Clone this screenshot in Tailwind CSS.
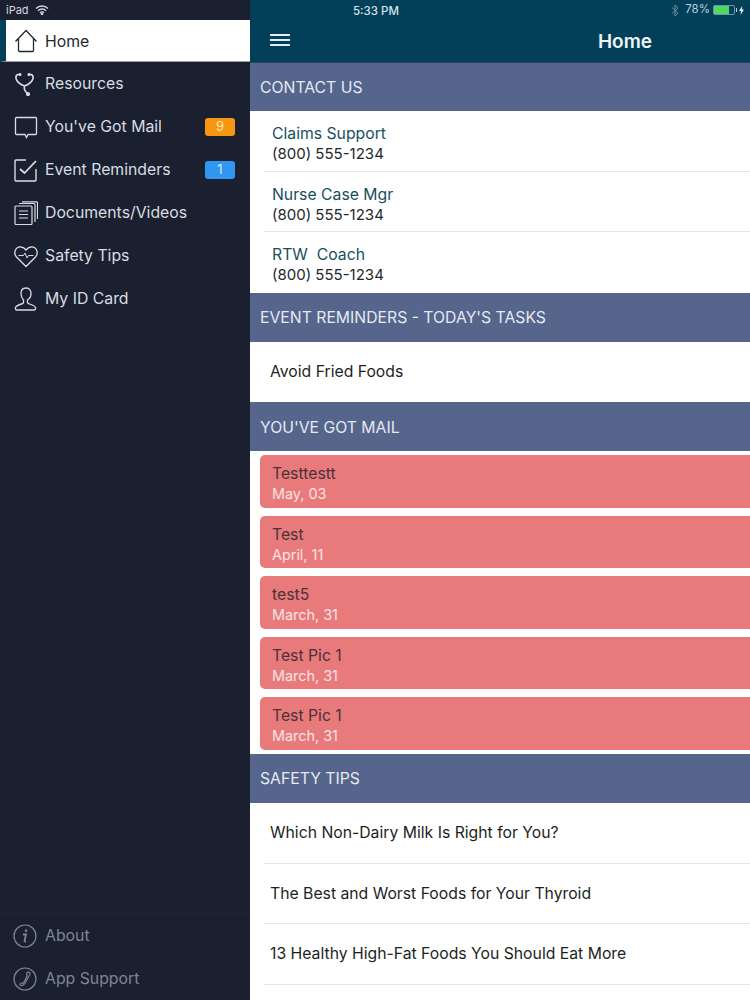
<!DOCTYPE html>
<html lang="en">
  <head>
    <meta charset="UTF-8" />
    <meta name="viewport" content="width=device-width, initial-scale=1.0" />
    <title>Home</title>
    <script src="https://cdn.jsdelivr.net/npm/@tailwindcss/browser@4"></script>
  </head>
  <body class="h-[1000px] w-[750px] overflow-hidden font-['Inter',sans-serif]">
    <div class="flex h-[1000px] w-[750px] overflow-hidden">
      <!-- side menu -->
      <aside class="flex h-full w-[250px] shrink-0 flex-col bg-[#1a2030] text-[#d8dce2]">
        <div class="flex h-[20px] items-center gap-[6px] pl-[6px] text-[11px] text-[#d5d8dd]">
          <span>iPad</span>
          <svg class="h-[10px] w-[14px]" viewBox="0 0 14 10" fill="none" stroke="currentColor" stroke-width="1.4">
            <path d="M1 3.500a8.500 8.500 0 0 1 12 0M3 5.700a5.600 5.600 0 0 1 8 0M5 7.700a2.800 2.800 0 0 1 4 0" />
            <circle cx="7" cy="9" r=".6" fill="currentColor" />
          </svg>
        </div>

        <a class="flex h-[42px] items-center border-b border-l-[6px] border-b-[#9a9ea6] border-l-[#02405a] bg-white text-[#23272f]">
          <svg class="ml-[8px] h-[24px] w-[24px]" viewBox="0 0 24 24" fill="none" stroke="currentColor" stroke-width="1.300">
            <path d="M1.500 12.500 12 1.500l10.500 11M4.500 10v11.500q0 1 1 1h13q1 0 1-1V10" />
          </svg>
          <span class="ml-[7px] pt-[2px] text-[15.8px]">Home</span>
        </a>

        <nav class="flex flex-col text-[15.8px]">
          <a class="flex h-[43px] items-center pl-[14px]">
            <svg class="h-[24px] w-[24px]" viewBox="0 0 24 24" fill="none" stroke="currentColor" stroke-width="1.600">
              <path d="M6 2.500H4Q1.500 3 2 6.500 3 11 10.500 14 18 11 19 6.500 19.500 3 17 2.500H15M10.500 14Q9.500 18 13 21" />
              <circle cx="14" cy="22" r="1.300" fill="currentColor" />
              <circle cx="6" cy="2.500" r=".8" fill="currentColor" />
              <circle cx="15" cy="2.500" r=".8" fill="currentColor" />
            </svg>
            <span class="ml-[7px]">Resources</span>
          </a>
          <a class="flex h-[43px] items-center pl-[14px]">
            <svg class="h-[24px] w-[24px]" viewBox="0 0 24 24" fill="none" stroke="currentColor" stroke-width="1.300">
              <path d="M2.500 2.500h19q1 0 1 1v15q0 1-1 1h-7.500l-1.500 3-1.500-3h-8.500q-1 0-1-1v-15q0-1 1-1Z" />
            </svg>
            <span class="ml-[7px]">You've Got Mail</span>
            <span class="mr-[15px] ml-auto flex h-[18px] w-[30px] items-center justify-center rounded-[3px] bg-[#f5970f] text-[13px] text-[#fde2b5]">9</span>
          </a>
          <a class="flex h-[43px] items-center pl-[14px]">
            <svg class="h-[24px] w-[24px]" viewBox="0 0 24 24" fill="none" stroke="currentColor" stroke-width="1.400">
              <path d="M12 2H2q-1 0-1 1v19q0 1 1 1h19q1 0 1-1V11" />
              <path d="m6 11 4.500 4L22 3" stroke-width="1.800" />
            </svg>
            <span class="ml-[7px]">Event Reminders</span>
            <span class="mr-[15px] ml-auto flex h-[18px] w-[30px] items-center justify-center rounded-[3px] bg-[#2f97f0] text-[13px] text-[#d5ebfd]">1</span>
          </a>
          <a class="flex h-[43px] items-center pl-[14px]">
            <svg class="h-[24px] w-[24px]" viewBox="0 0 24 24" fill="none" stroke="currentColor" stroke-width="1.200">
              <rect x="1" y="5" width="17" height="18.500" rx="1" />
              <path d="M5 2.500h15q1 0 1 1V21M8 .8h14.500q1 0 1 .8V18M5 10h9M5 13.500h9M5 17h9" />
            </svg>
            <span class="ml-[7px]">Documents/Videos</span>
          </a>
          <a class="flex h-[43px] items-center pl-[14px]">
            <svg class="h-[24px] w-[24px]" viewBox="0 0 24 24" fill="none" stroke="currentColor" stroke-width="1.300">
              <path d="M12 22.500 2.500 13Q0 10 1.200 6.500 3 2.500 7 3q3 .3 5 3 2-2.700 5-3 4-.5 5.800 3.500Q24 10 21.500 13Z" />
              <path d="M4.500 11.500h5l1.500-2.500 2 5 1.500-2.500h5" stroke-width="1" />
            </svg>
            <span class="ml-[7px]">Safety Tips</span>
          </a>
          <a class="flex h-[43px] items-center pl-[14px]">
            <svg class="h-[24px] w-[24px]" viewBox="0 0 24 24" fill="none" stroke="currentColor" stroke-width="1.300">
              <path d="M12 1c-3.500 0-5 2.500-5 5.500 0 2.500 1 5 2.500 6.500v2.500q-.2 1-2 1.500-5 1.500-6 3.500-.5 2.500 1.500 2.500h17q2 0 1.500-2.500-1-2-6-3.500-1.800-.5-2-1.500V13C16 11.500 17 9 17 6.500 17 3.500 15.500 1 12 1Z" />
            </svg>
            <span class="ml-[7px]">My ID Card</span>
          </a>
        </nav>

        <div class="mt-auto flex flex-col border-t border-[#20263a] text-[15.8px] text-[#7f8591]">
          <a class="flex h-[43px] items-center pl-[13px]">
            <svg class="h-[24px] w-[24px]" viewBox="0 0 24 24" fill="none" stroke="currentColor" stroke-width="1.200">
              <circle cx="12" cy="12" r="11" />
              <path d="M10 10.500h3l-1.500 6.500q0 .8 1.500.3" stroke-width="1.800" />
              <circle cx="13" cy="6.800" r="1.300" fill="currentColor" stroke="none" />
            </svg>
            <span class="ml-[8px]">About</span>
          </a>
          <a class="flex h-[43px] items-center pl-[13px]">
            <svg class="h-[24px] w-[24px]" viewBox="0 0 24 24" fill="none" stroke="currentColor" stroke-width="1.200">
              <circle cx="12" cy="12" r="11" />
              <path d="M14 5.500q2-1 3 .5 .5 1-1 3l-3.500 6.500q-1.500 2.500-3 3-2 .5-2.500-1-.2-1 1.500-1.500l1.500.3q1-1 1.700-2.500l2.300-4.800q-.5-.8-.2-1.500Z" />
            </svg>
            <span class="ml-[8px]">App Support</span>
          </a>
        </div>
      </aside>

      <!-- content, wider than the window so it runs off the right edge -->
      <div class="relative h-full w-[500px] shrink-0 overflow-hidden">
        <main class="flex w-[750px] flex-col bg-white">
          <header class="relative h-[63px] shrink-0 border-b border-[#2b4458] bg-[#02405a] text-white">
            <div class="pt-[3px] pl-[103px] text-[11.500px] font-medium text-[#d7e3e8]">5:33 PM</div>
            <div class="absolute top-[34px] left-[20px] flex w-[20px] flex-col gap-[3px]">
              <div class="h-[2px] bg-[#e3ecef]"></div>
              <div class="h-[2px] bg-[#e3ecef]"></div>
              <div class="h-[2px] bg-[#e3ecef]"></div>
            </div>
            <div class="absolute top-[30px] left-0 w-[750px] text-center text-[19px] leading-[24px] font-semibold text-[#eef5f7]">Home</div>
          </header>

          <div class="flex h-[48px] items-center bg-[#55658c] pt-[2px] pl-[10px] text-[15.750px] text-[#e6eaf2]">CONTACT US</div>
          <div class="flex h-[182px] flex-col pl-[14px]">
            <div class="h-[61px] border-b border-[#e6e8e8] pt-[12px] pl-[8px]">
              <div class="text-[15.750px] leading-[21px] text-[#174f60]">Claims Support</div>
              <div class="text-[15px] leading-[19px] text-[#23272b]">(800) 555-1234</div>
            </div>
            <div class="h-[60px] border-b border-[#e6e8e8] pt-[12px] pl-[8px]">
              <div class="text-[15.750px] leading-[21px] text-[#174f60]">Nurse Case Mgr</div>
              <div class="text-[15px] leading-[19px] text-[#23272b]">(800) 555-1234</div>
            </div>
            <div class="h-[61px] pt-[12px] pl-[8px]">
              <div class="text-[15.750px] leading-[21px] text-[#174f60]">RTW&nbsp; Coach</div>
              <div class="text-[15px] leading-[20px] text-[#23272b]">(800) 555-1234</div>
            </div>
          </div>

          <div class="flex h-[49px] items-center bg-[#55658c] pl-[10px] text-[15.750px] text-[#e6eaf2]">EVENT REMINDERS - TODAY'S TASKS</div>
          <div class="flex h-[60px] items-center pl-[20px] text-[15.750px] text-[#1c1f22]">Avoid Fried Foods</div>

          <div class="flex h-[49px] items-center bg-[#55658c] pt-[2px] pl-[10px] text-[15.750px] text-[#e6eaf2]">YOU'VE GOT MAIL</div>
          <div class="flex h-[303px] flex-col gap-[8px] pt-[4px] pl-[10px]">
            <div class="h-[52.500px] rounded-[5px] bg-[#e87a7c] pt-[8px] pl-[12px]">
              <div class="text-[15.750px] leading-[21px] text-[#4b3237]">Testtestt</div>
              <div class="text-[14.400px] leading-[19px] text-[#fbe4e2]">May, 03</div>
            </div>
            <div class="h-[52.500px] rounded-[5px] bg-[#e87a7c] pt-[8px] pl-[12px]">
              <div class="text-[15.750px] leading-[21px] text-[#4b3237]">Test</div>
              <div class="text-[14.400px] leading-[19px] text-[#fbe4e2]">April, 11</div>
            </div>
            <div class="h-[52.500px] rounded-[5px] bg-[#e87a7c] pt-[8px] pl-[12px]">
              <div class="text-[15.750px] leading-[21px] text-[#4b3237]">test5</div>
              <div class="text-[14.400px] leading-[19px] text-[#fbe4e2]">March, 31</div>
            </div>
            <div class="h-[52.500px] rounded-[5px] bg-[#e87a7c] pt-[8px] pl-[12px]">
              <div class="text-[15.750px] leading-[21px] text-[#4b3237]">Test Pic 1</div>
              <div class="text-[14.400px] leading-[19px] text-[#fbe4e2]">March, 31</div>
            </div>
            <div class="h-[52.500px] rounded-[5px] bg-[#e87a7c] pt-[8px] pl-[12px]">
              <div class="text-[15.750px] leading-[21px] text-[#4b3237]">Test Pic 1</div>
              <div class="text-[14.400px] leading-[19px] text-[#fbe4e2]">March, 31</div>
            </div>
          </div>

          <div class="flex h-[49px] items-center bg-[#55658c] pl-[10px] text-[15.750px] text-[#e6eaf2]">SAFETY TIPS</div>
          <div class="flex flex-col pl-[14px] text-[15.750px] text-[#1c1f22]">
            <div class="flex h-[61px] items-center border-b border-[#e6e8e8] pl-[6px]">Which Non-Dairy Milk Is Right for You?</div>
            <div class="flex h-[60px] items-center border-b border-[#e6e8e8] pl-[6px]">The Best and Worst Foods for Your Thyroid</div>
            <div class="flex h-[61px] items-center border-b border-[#e6e8e8] pl-[6px]">13 Healthy High-Fat Foods You Should Eat More</div>
          </div>
        </main>

        <!-- status bar, right side -->
        <div class="absolute top-0 right-0 flex h-[20px] items-center pr-[6px] text-[11.500px] text-[#b9d0da]">
          <svg class="mr-[6px] h-[13px] w-[8px] text-[#6f8c9a]" viewBox="0 0 8 13" fill="none" stroke="currentColor" stroke-width="1">
            <path d="m1 3.500 6 5.500-3 3V1l3 3-6 5.500" />
          </svg>
          <span class="mr-[3px]">78%</span>
          <div class="mr-[2px] flex items-center gap-[1px]">
            <div class="h-[10px] w-[22px] rounded-[2px] border border-[#b9d0da]/60">
              <div class="h-full w-[75%] bg-[#4fd964]"></div>
            </div>
            <div class="h-[4px] w-[1px] bg-[#b9d0da]"></div>
          </div>
          <svg class="h-[9px] w-[5px]" viewBox="0 0 5 9" fill="#e3ecef"><path d="M3.200 0 0 5h2L1.500 9 5 3.500H3Z" /></svg>
        </div>
      </div>
    </div>
  </body>
</html>
